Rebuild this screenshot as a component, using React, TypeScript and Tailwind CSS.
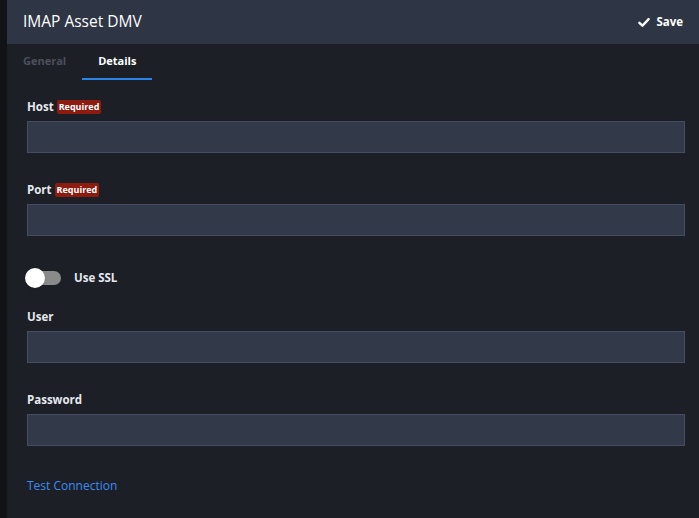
import { useState } from "react";

const fields = [
  { label: "Host", required: true },
  { label: "Port", required: true },
];

function Field({ label, required }: { label: string; required?: boolean }) {
  return (
    <div className="flex flex-col">
      <div className="flex h-[14px] items-center gap-[3px]">
        <span className="text-[11.5px] font-bold text-[#e6e9ef]">{label}</span>
        {required && (
          <span className="rounded-[2px] bg-[#8e1b0f] px-[2px] text-[9px] font-bold leading-[14px] text-white">
            Required
          </span>
        )}
      </div>
      <input
        className="mt-[7px] h-[32px] w-full border border-[#444d62] bg-[#323a4a] px-2 text-[13px] text-white outline-none"
        type="text"
      />
    </div>
  );
}

export default function App() {
  const [tab, setTab] = useState("Details");
  const [ssl, setSsl] = useState(false);
  return (
    <div
      className="flex h-[518px] w-[699px] overflow-hidden bg-[#111317]"
      style={{ fontFamily: '"Open Sans", "Noto Sans", sans-serif' }}
    >
      <div className="w-[7px] shrink-0 bg-[#111317]"></div>
      <div className="flex flex-1 flex-col bg-[#1c1f26]">
        {/* header */}
        <header className="flex h-[44px] shrink-0 items-center justify-between bg-[#2e3544] pl-[16px] pr-[16px]">
          <h1 className="text-[15.5px] text-white">IMAP Asset DMV</h1>
          <button className="flex items-center gap-[6px] text-[11.5px] font-bold text-white">
            <svg width="12" height="11" viewBox="0 0 13 11" fill="none">
              <path
                d="M1.5 5.8 L4.8 9 L11.5 1.8"
                stroke="white"
                strokeWidth="2.6"
                strokeLinecap="round"
                strokeLinejoin="round"
              />
            </svg>
            Save
          </button>
        </header>

        {/* tabs */}
        <nav className="flex h-[36px] shrink-0">
          {["General", "Details"].map((t) => (
            <button
              key={t}
              onClick={() => setTab(t)}
              className={`flex h-full items-center border-b-2 px-4 pt-[1px] text-[11px] font-bold ${
                tab === t
                  ? "border-[#2b84e8] text-white"
                  : "border-transparent text-[#4b505b]"
              }`}
            >
              {t}
            </button>
          ))}
        </nav>

        {/* form */}
        <div className="flex flex-col pl-[20px] pr-[14px] pt-[20px]">
          <Field {...fields[0]} />
          <div className="mt-[30px]">
            <Field {...fields[1]} />
          </div>

          <div className="mt-[32px] flex h-[20px] items-center">
            <button
              onClick={() => setSsl(!ssl)}
              className="relative ml-[-2px] h-[20px] w-[36px]"
              aria-label="Use SSL"
            >
              <span
                className={`absolute left-[2px] top-[3px] h-[14px] w-[34px] rounded-full ${
                  ssl ? "bg-[#2b84e8]" : "bg-[#8a8a8a]"
                }`}
              ></span>
              <span
                className={`absolute top-0 h-[20px] w-[20px] rounded-full bg-white shadow ${
                  ssl ? "left-[16px]" : "left-0"
                }`}
              ></span>
            </button>
            <span className="ml-[13px] text-[11.5px] font-bold text-[#e6e9ef]">Use SSL</span>
          </div>

          <div className="mt-[22px]">
            <Field label="User" />
          </div>
          <div className="mt-[30px]">
            <Field label="Password" />
          </div>

          <a href="#" className="mt-[31px] text-[12px] text-[#3b8cf0]">
            Test Connection
          </a>
        </div>
      </div>
    </div>
  );
}
